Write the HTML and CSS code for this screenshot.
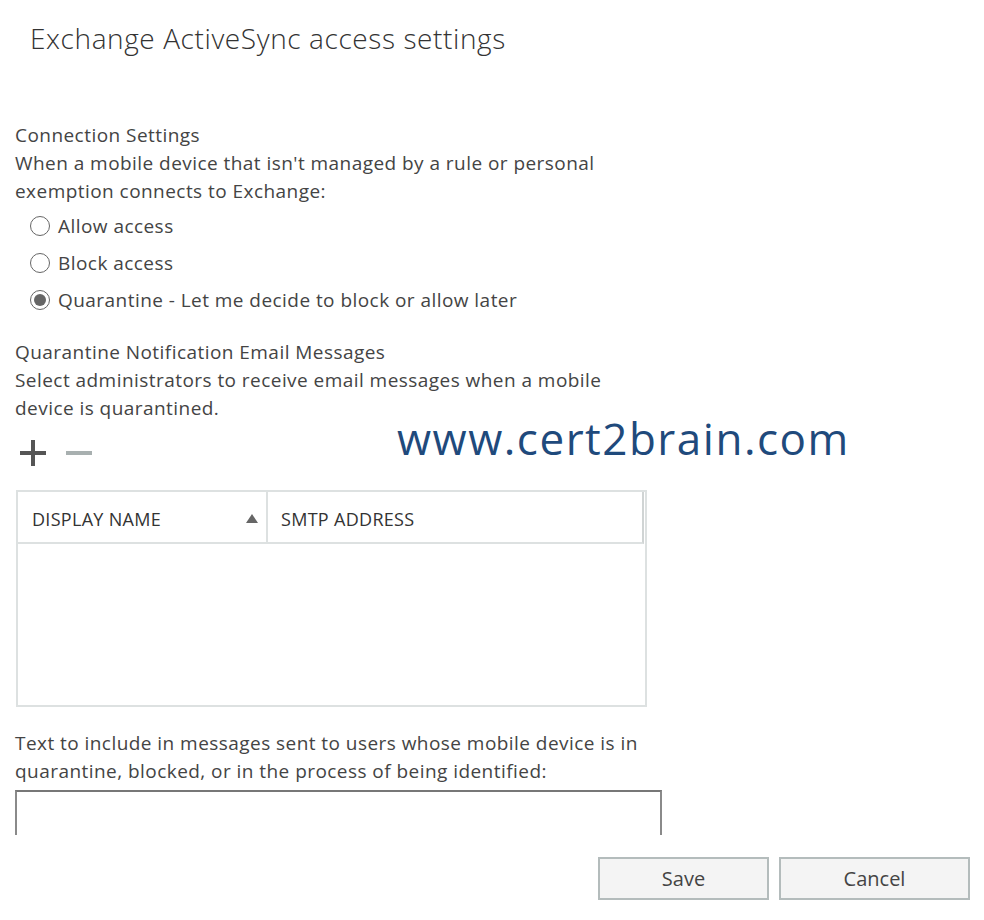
FILE: index.html
```html
<!DOCTYPE html>
<html>
	<head>
		<meta charset="utf-8">
		<title>Exchange ActiveSync access settings</title>
		<link rel="stylesheet" href="styles.css">
	</head>
	<body>
		<div class="page">
			<h1 class="title">Exchange ActiveSync access settings</h1>

			<div class="section connection">
				<div class="heading">Connection Settings</div>
				<p class="desc">When a mobile device that isn't managed by a rule or personal exemption connects to Exchange:</p>
				<ul class="radios">
					<li class="radio"><span class="dot"></span>Allow access</li>
					<li class="radio"><span class="dot"></span>Block access</li>
					<li class="radio checked"><span class="dot"></span>Quarantine - Let me decide to block or allow later</li>
				</ul>
			</div>

			<div class="section notify">
				<div class="heading">Quarantine Notification Email Messages</div>
				<p class="desc">Select administrators to receive email messages when a mobile device is quarantined.</p>
				<div class="tools">
					<span class="plus"></span>
					<span class="minus"></span>
				</div>
				<div class="grid">
					<div class="grid-head">
						<div class="col name">DISPLAY NAME <span class="sort"></span></div>
						<div class="col smtp">SMTP ADDRESS</div>
					</div>
				</div>
			</div>

			<div class="section message">
				<p class="desc wide">Text to include in messages sent to users whose mobile device is in quarantine, blocked, or in the process of being identified:</p>
				<div class="textbox"></div>
			</div>

			<div class="buttons">
				<button class="btn save">Save</button>
				<button class="btn cancel">Cancel</button>
			</div>

			<div class="watermark">www.cert2brain.com</div>
		</div>
	</body>
</html>
```

FILE: styles.css
```css
* {
	margin: 0;
	padding: 0;
	box-sizing: border-box;
}

body {
	background: #ffffff;
	font-family: "Open Sans", "Noto Sans", sans-serif;
	color: #444444;
}

ul {
	list-style: none;
}

.page {
	position: relative;
	width: 984px;
	height: 920px;
	padding: 0 14px 0 15px;
}

.title {
	font-size: 28px;
	font-weight: 300;
	letter-spacing: 0.6px;
	line-height: 36px;
	color: #333333;
	padding: 20px 0 0 15px;
}

.section {
	font-size: 19px;
	letter-spacing: 0.45px;
	line-height: 28px;
}

.connection {
	margin-top: 65px;
}

.desc {
	width: 600px;
}

.desc.wide {
	width: 645px;
}

.radios {
	margin-top: 2px;
	padding-left: 15px;
}

.radio {
	display: flex;
	align-items: center;
	height: 37px;
}

/* radio circle */
.radio .dot {
	width: 20px;
	height: 20px;
	border: 1px solid #666666;
	border-radius: 50%;
	margin-right: 8px;
	position: relative;
}

.radio.checked .dot::after {
	content: "";
	position: absolute;
	left: 3px;
	top: 3px;
	width: 12px;
	height: 12px;
	border-radius: 50%;
	background: #666666;
}

.notify {
	margin-top: 20px;
}

.tools {
	display: flex;
	align-items: center;
	gap: 20px;
	height: 30px;
	margin-top: 16px;
	padding-left: 5px;
}

.plus,
.minus {
	position: relative;
	width: 26px;
	height: 26px;
}

.plus::before,
.plus::after,
.minus::before {
	content: "";
	position: absolute;
	background: #555555;
}

.plus::before,
.minus::before {
	left: 0;
	top: 11px;
	width: 26px;
	height: 4px;
}

.plus::after {
	left: 11px;
	top: 0;
	width: 4px;
	height: 26px;
}

.minus::before {
	background: #a8b0b0;
}

.grid {
	margin-top: 22px;
	margin-left: 1px;
	width: 631px;
	height: 217px;
	border: 2px solid #dde1e1;
}

.grid-head {
	display: flex;
	height: 52px;
	border-bottom: 2px solid #dde1e1;
	border-right: 2px solid #d0d4d4;
	margin-right: 1px;
	font-size: 18px;
	letter-spacing: 0.3px;
	color: #333333;
}

.grid-head .col {
	display: flex;
	align-items: center;
	padding-top: 3px;
}

.grid-head .name {
	width: 250px;
	padding-left: 14px;
	justify-content: space-between;
	padding-right: 8px;
	border-right: 2px solid #dde1e1;
}

.grid-head .smtp {
	padding-left: 13px;
}

.sort {
	width: 0;
	height: 0;
	border-left: 6px solid transparent;
	border-right: 6px solid transparent;
	border-bottom: 9px solid #666666;
}

.message {
	margin-top: 22px;
}

.textbox {
	margin-top: 5px;
	width: 647px;
	height: 45px;
	border: 2px solid #8a8a8a;
	border-bottom: none;
	border-top-color: #777777;
}

.buttons {
	display: flex;
	justify-content: flex-end;
	gap: 10px;
	margin-top: 22px;
}

.btn {
	height: 43px;
	background: #f4f4f4;
	border: 2px solid #b4bcbc;
	font-family: "Open Sans", "Noto Sans", sans-serif;
	font-size: 20px;
	color: #444444;
}

.btn.save {
	width: 171px;
}

.btn.cancel {
	width: 191px;
}

/* watermark over the page */
.watermark {
	position: absolute;
	left: 397px;
	top: 408px;
	font-family: "Open Sans", sans-serif;
	font-size: 44px;
	letter-spacing: 1.5px;
	line-height: 60px;
	color: #1f4a7c;
}
```
